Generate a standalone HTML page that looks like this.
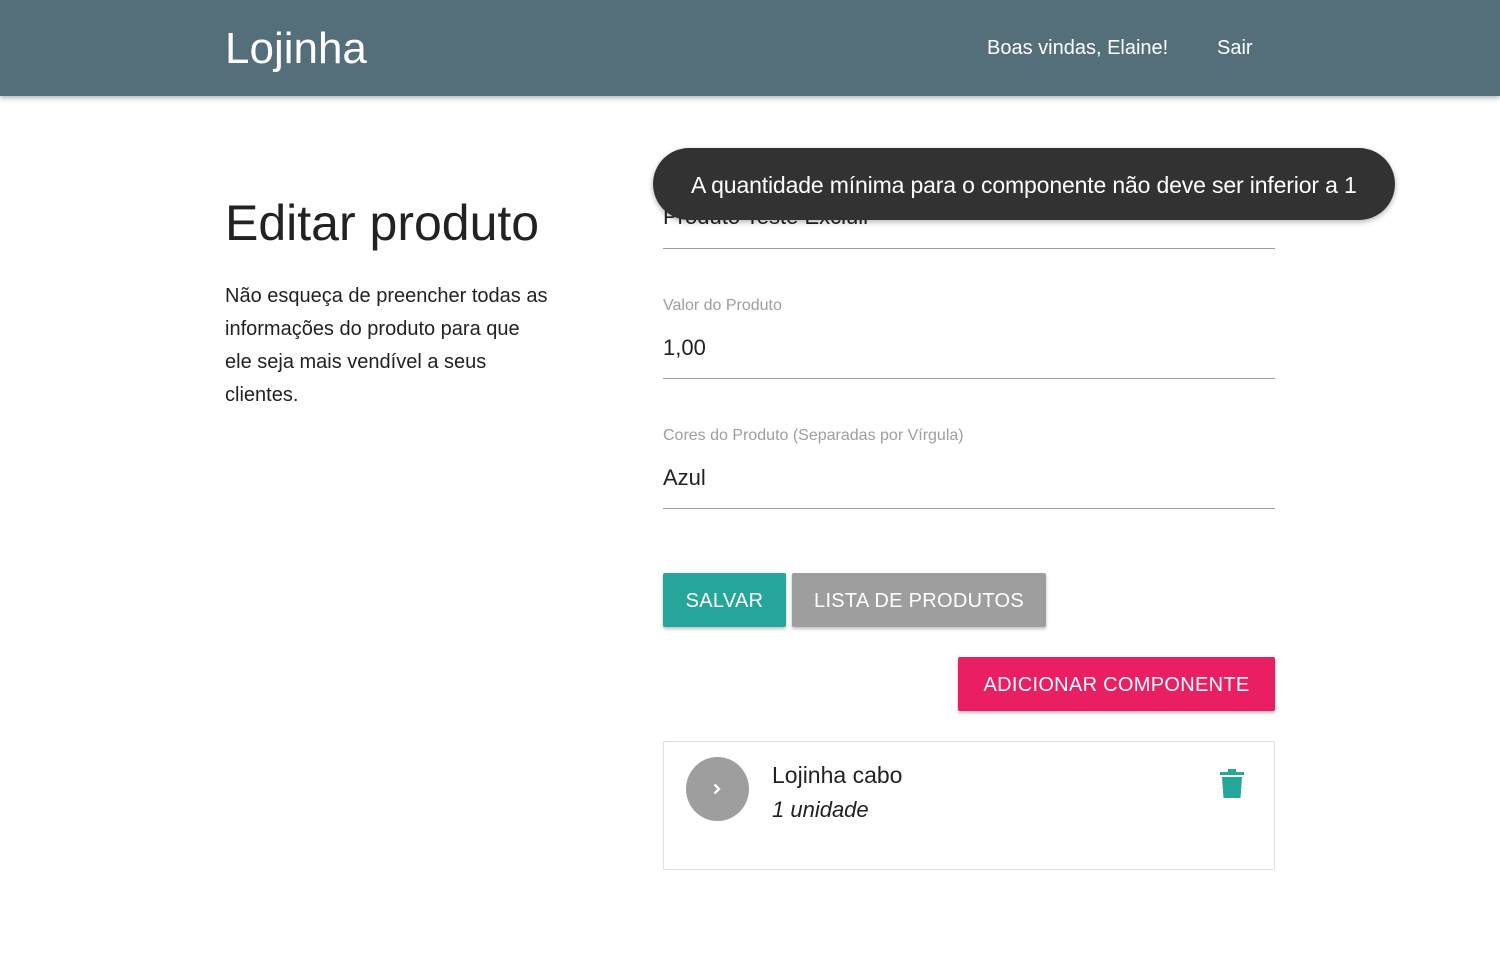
<!DOCTYPE html>
<html><head><meta charset="utf-8"><style>
*{box-sizing:border-box;margin:0;padding:0}
body{width:1500px;height:973px;overflow:hidden;background:#fff;font-family:"Liberation Sans",sans-serif;color:#222;position:relative}
.nav{position:absolute;left:0;top:0;width:1500px;height:96px;background:#546e7a;box-shadow:0 2px 5px rgba(0,0,0,.3)}
.abs{position:absolute;white-space:nowrap}
.line{position:absolute;left:663px;width:612px;height:1px;background:#9e9e9e}
.lbl{color:#9e9e9e;font-size:16px}
.btn{position:absolute;color:#fff;font-size:20px;text-align:center;box-shadow:0 2px 3px rgba(0,0,0,.25);border-radius:2px;letter-spacing:.3px}
</style></head><body>
<div class="nav"></div>
<div class="abs" style="left:225px;top:24px;font-size:44px;color:#fff">Lojinha</div>
<div class="abs" style="left:987px;top:37px;font-size:20px;color:#fff">Boas vindas, Elaine!</div>
<div class="abs" style="left:1217px;top:37px;font-size:20px;color:#fff">Sair</div>
<div class="abs" style="left:225px;top:194px;font-size:50px">Editar produto</div>
<div class="abs" style="left:225px;top:280px;font-size:20px;line-height:33px">Não esqueça de preencher todas as<br>informações do produto para que<br>ele seja mais vendível a seus<br>clientes.</div>
<div class="abs" style="left:663px;top:204px;font-size:22px">Produto Teste Excluir</div>
<div class="line" style="top:248px"></div>
<div class="abs lbl" style="left:663px;top:297px">Valor do Produto</div>
<div class="abs" style="left:663px;top:335px;font-size:22px">1,00</div>
<div class="line" style="top:378px"></div>
<div class="abs lbl" style="left:663px;top:427px">Cores do Produto (Separadas por Vírgula)</div>
<div class="abs" style="left:663px;top:465px;font-size:22px">Azul</div>
<div class="line" style="top:508px"></div>
<div class="btn" style="left:663px;top:573px;width:123px;height:54px;line-height:56px;background:#26a69a">SALVAR</div>
<div class="btn" style="left:792px;top:573px;width:254px;height:54px;line-height:56px;background:#9e9e9e">LISTA DE PRODUTOS</div>
<div class="btn" style="left:958px;top:657px;width:317px;height:54px;line-height:56px;background:#e91e63">ADICIONAR COMPONENTE</div>
<div class="abs" style="left:663px;top:741px;width:612px;height:129px;border:1px solid #e0e0e0;border-radius:2px"></div>
<div class="abs" style="left:686px;top:757px;width:63px;height:64px;border-radius:50%;background:#9e9e9e"></div>
<svg class="abs" style="left:712px;top:782px" width="10" height="14" viewBox="0 0 10 14"><path d="M2.5 2.5l4.5 4.5-4.5 4.5" stroke="#fff" stroke-width="2.4" fill="none"/></svg>
<div class="abs" style="left:772px;top:762px;font-size:23px">Lojinha cabo</div>
<div class="abs" style="left:772px;top:797px;font-size:22px;font-style:italic">1 unidade</div>
<svg class="abs" style="left:1220px;top:769px" width="24" height="30" viewBox="0 0 24 30"><rect x="0" y="3" width="24" height="3" fill="#26a69a"/><rect x="8" y="0" width="8" height="4" fill="#26a69a"/><path d="M2 8h20l-1.5 21h-17z" fill="#26a69a"/></svg>
<div class="abs" style="left:653px;top:148px;width:742px;height:72px;background:#323232;border-radius:36px;box-shadow:0 2px 6px rgba(0,0,0,.3);color:#fff;font-size:23px;line-height:74px;padding-left:38px;letter-spacing:-0.15px">A quantidade mínima para o componente não deve ser inferior a 1</div>
</body></html>
